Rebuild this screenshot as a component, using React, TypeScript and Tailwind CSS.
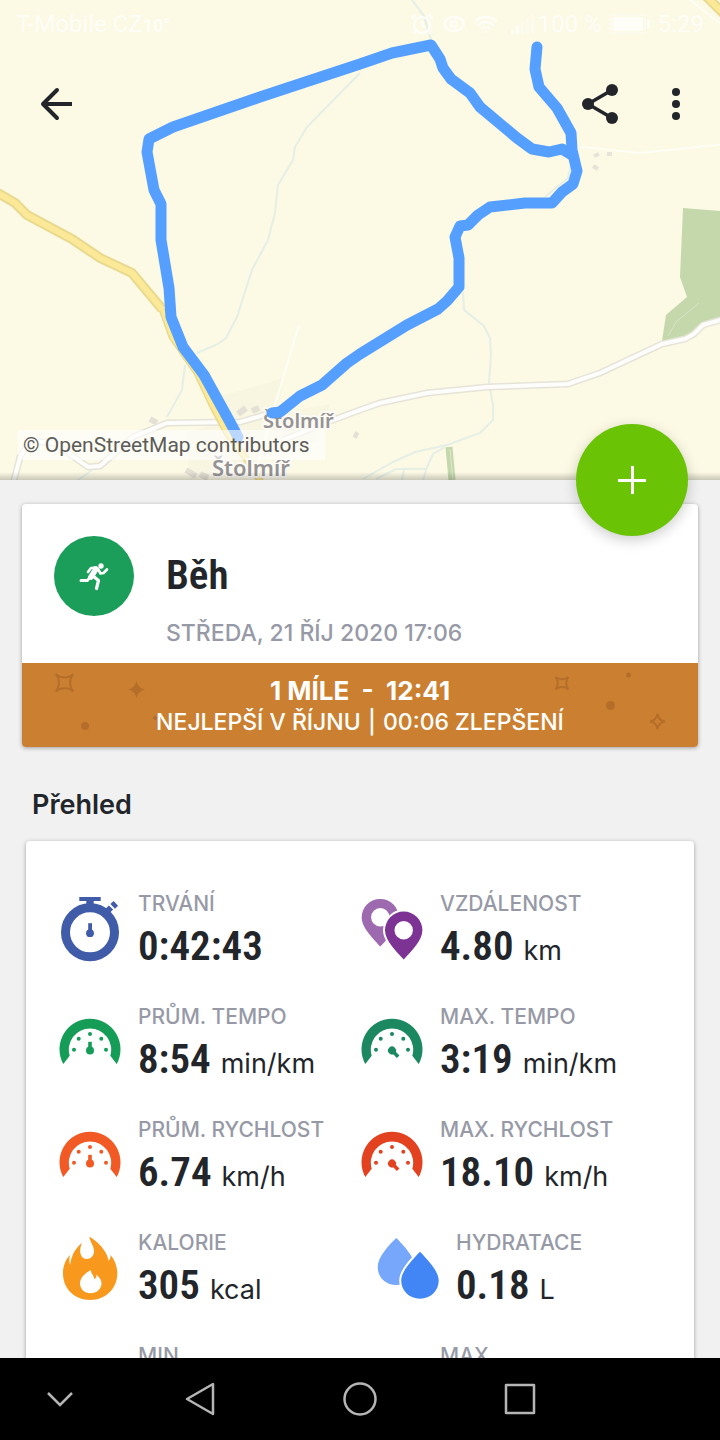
import type { ReactNode } from 'react';
import { AlarmClock, Eye, Wifi } from 'lucide-react';

const ROUTE_WEST =
  'M238 437 L230 422 L204 375 L183 347 L171 317 L169 288 L161 240 L161 204 L154 190 L147 152 L149 139 L173 127 L260 97 L360 64 L392 53 L431 45 L440 59 L443 68 L451 79 L470 93 L480 107 L517 138 L532 149 L549 152 L562 149 L572 155';
const ROUTE_EAST =
  'M537 47 L535 69 L539 87 L557 108 L571 133 L572 150 L577 171 L573 184 L562 192 L552 203 L525 203 L490 207 L478 215 L468 225 L460 226 L455 237 L459 258 L459 287 L447 301 L438 309 L407 325 L360 354 L347 363 L322 385 L300 396 L280 412 L272 413';
const MAIN_ROAD_WIDE = 'M-4 192 L15 203 L27 215 L72 239 L100 258 L132 273 L162 309';
const MAIN_ROAD_NARROW = 'M162 309 L172 337 L197 373 L213 407 L227 433 L247 460 L262 484';
const SIDE_ROAD =
  'M13 484 L20 457 L30 441 L55 443 L68 453 L88 467 L100 466 L133 437 L167 423 L240 422 L268 414 M283 440 L333 420 L360 410 L380 403 L427 393 L487 387 L568 384 L600 373 L662 344 L685 339 L694 334 L703 325 L724 319';

function RouteMap() {
  return (
    <svg
      viewBox="0 0 720 480"
      preserveAspectRatio="xMidYMid slice"
      className="absolute inset-0 h-full w-full"
      role="img"
      aria-label="Mapa trasy"
    >
      <rect width="720" height="480" fill="#fcf9e5" />
      <path d="M222 396 L284 378 L276 414 L330 404 L318 440 L190 480 L186 432 L232 420 Z" fill="#f8f5e1" />
      <path d="M683 208 L720 211 L720 320 L703 326 L685 338 L662 341 L666 315 L687 297 L680 277 Z" fill="#c4d8ac" />
      <path d="M668 336 L676 322 L699 303" fill="none" stroke="#d9e4c6" strokeWidth="1" />
      <path d="M449 447 L452 480" stroke="#c4d8ac" strokeWidth="7" />
      <path d="M450 449 L453 480" stroke="#dfe8cc" strokeWidth="1" />
      <g fill="none" stroke="#e5efe6" strokeWidth="2">
        <path d="M360 73 L307 127 L295 147 L293 160 L278 185 L275 213 L268 240 L252 270 L237 317 L226 338 L218 344 L197 353" />
        <path d="M185 365 L182 390 L167 417 M412 0 L424 16 L431 40" />
        <path d="M463 293 L464 310 L484 326 L490 338 L491 355 L489 383 L493 405 L493 420 L480 433 L447 445 L415 452 L393 462 L363 479" />
        <path d="M445 447 L433 454 L427 467 L423 480 M425 469 L396 469 L376 479 M404 470 L402 480" />
        <path d="M572 160 L568 178 L545 197 M95 468 L78 480" />
      </g>
      <path d="M581 147 L640 153 L724 144 M690 0 L724 26 M299 325 L283 378 L256 470" fill="none" stroke="#fefdf6" strokeWidth="2" />
      <path d="M594 156 l5 -2 M607 154 l5 0 M593 166 l5 3" stroke="#e6e3d8" strokeWidth="4" />
      <path d="M150 419 l7 4 M238 414 l8 -6 M252 411 l7 -3 M186 470 l10 6 M200 474 l8 4 M354 434 l4 2" stroke="#e5e0d6" strokeWidth="6" />
      <path d={SIDE_ROAD} fill="none" stroke="#e6e4d8" strokeWidth="7" />
      <path d={SIDE_ROAD} fill="none" stroke="#fdfdfb" strokeWidth="4" />
      <path d={MAIN_ROAD_NARROW} fill="none" stroke="#e9d98f" strokeWidth="7" />
      <path d={MAIN_ROAD_NARROW} fill="none" stroke="#fce998" strokeWidth="4" />
      <path d={MAIN_ROAD_WIDE} fill="none" stroke="#e9d98f" strokeWidth="10" />
      <path d={MAIN_ROAD_WIDE} fill="none" stroke="#fce998" strokeWidth="6" />
      <path d="M704 -6 L724 14" stroke="#e9d98f" strokeWidth="10" />
      <path d="M704 -6 L724 14" stroke="#fce998" strokeWidth="6" />
      <g
        className="font-['Noto_Sans',sans-serif] font-semibold"
        fill="#949292"
        stroke="#fbfaf4"
        strokeWidth="4"
        paintOrder="stroke"
      >
        <text x="263" y="428" fontSize="20">Štolmíř</text>
        <text x="212" y="476" fontSize="22">Štolmíř</text>
      </g>
      <g fill="none" stroke="#549fff" strokeWidth="11" strokeLinejoin="round" strokeLinecap="round">
        <path d={ROUTE_WEST} />
        <path d={ROUTE_EAST} />
      </g>
    </svg>
  );
}

function StatusBar() {
  return (
    <div className="relative flex h-12 items-center justify-between px-4 font-[Roboto,sans-serif] text-2xl text-white/70">
      <div className="flex items-baseline">
        <span>T-Mobile CZ</span>
        <span className="text-lg font-bold">10°</span>
      </div>
      <div className="flex items-center gap-2">
        <AlarmClock size={24} strokeWidth={2.5} />
        <Eye size={24} strokeWidth={2.5} />
        <Wifi size={24} strokeWidth={2.5} />
        <span className="flex items-center gap-1">
          <svg width="28" height="20" viewBox="0 0 28 20" fill="currentColor" aria-hidden="true">
            <path d="M5 16h3v4H5zM10 12h3v8h-3z" />
            <path d="M15 8h3v12h-3zM20 4h3v16h-3zM25 0h3v20h-3z" opacity=".5" />
          </svg>
          <span>100 %</span>
        </span>
        <svg width="40" height="20" viewBox="0 0 40 20" fill="currentColor" aria-hidden="true">
          <rect x="1" y="1" width="34" height="18" rx="2" fill="none" stroke="currentColor" strokeWidth="1" />
          <rect x="3" y="3" width="30" height="14" />
          <rect x="37" y="6" width="3" height="8" />
        </svg>
        <span>5:29</span>
      </div>
    </div>
  );
}

function BackIcon() {
  return (
    <svg width="48" height="48" viewBox="0 0 48 48" fill="none" stroke="#22262a" strokeWidth="4" aria-hidden="true">
      <path d="M40 24 H12" />
      <path d="M25 10 L11 24 L25 38" strokeLinecap="round" strokeLinejoin="round" />
    </svg>
  );
}

function ShareIcon() {
  return (
    <svg width="48" height="48" viewBox="0 0 48 48" fill="#22262a" aria-hidden="true">
      <path d="M36 10 L12 24 L36 38" fill="none" stroke="#22262a" strokeWidth="3.5" />
      <circle cx="36" cy="10" r="6" />
      <circle cx="12" cy="24" r="6" />
      <circle cx="36" cy="38" r="6" />
    </svg>
  );
}

function MoreIcon() {
  return (
    <svg width="48" height="48" viewBox="0 0 48 48" fill="#22262a" aria-hidden="true">
      <circle cx="24" cy="12" r="4" />
      <circle cx="24" cy="24" r="4" />
      <circle cx="24" cy="36" r="4" />
    </svg>
  );
}

function RunnerIcon() {
  return (
    <svg width="32" height="32" viewBox="0 0 32 32" fill="none" stroke="#fff" strokeLinecap="round" strokeLinejoin="round" aria-hidden="true">
      <circle cx="23" cy="6" r="2.7" fill="#fff" stroke="none" />
      <path d="M18 9 L13 17" strokeWidth="5.5" />
      <path d="M18 7.5 L13 8 L10 12" strokeWidth="2.6" />
      <path d="M20 9 L22.5 13.5 L25.5 13 L29 9.5" strokeWidth="2.6" />
      <path d="M12 17 L9.5 20.5 L3 20.5" strokeWidth="3" />
      <path d="M15 16 L20.5 20.5 L18.5 28.5" strokeWidth="3.2" />
    </svg>
  );
}

function StopwatchIcon() {
  return (
    <svg viewBox="0 0 64 64" className="h-16 w-16 overflow-visible" fill="#405ca8" aria-hidden="true">
      <circle cx="32" cy="34.3" r="24.5" fill="none" stroke="#405ca8" strokeWidth="9" />
      <path d="M21.3 -1h21.4v4h-7v6h-7.4V3h-7z" />
      <path d="M48 14.5 L53 9.5" stroke="#405ca8" strokeWidth="6" />
      <path d="M54.7 8.3 L57.8 5.3" stroke="#405ca8" strokeWidth="6.5" />
      <rect x="30.2" y="25.2" width="3.8" height="9" />
      <circle cx="32" cy="35.2" r="3.9" />
    </svg>
  );
}

function GaugeIcon({ color, max }: { color: string; max?: boolean }) {
  return (
    <svg viewBox="0 0 64 64" className="h-16 w-16" fill={color} aria-hidden="true">
      <path d="M5.3 53 A30.5 30.5 0 1 1 58.7 53 L52.3 44.8 A21.2 21.2 0 1 0 11.7 44.8 Z" />
      <circle cx="16" cy="38.7" r="2" />
      <circle cx="20.7" cy="27.7" r="2" />
      <circle cx="32" cy="23" r="2" />
      <circle cx="43.3" cy="27.7" r="2" />
      <circle cx="48" cy="38.7" r="2" />
      <g transform={max ? 'rotate(135 32 39.5)' : undefined}>
        <rect x="30.2" y="30.8" width="3.6" height="9" />
        <circle cx="32" cy="39.5" r="4" />
      </g>
    </svg>
  );
}

function PinsIcon() {
  return (
    <svg viewBox="0 0 64 64" className="h-16 w-16" aria-hidden="true">
      <path d="M20.3 48.5 C14 41 1.7 30 1.7 19.4 A18.5 18.5 0 0 1 38.7 19.4 C38.7 30 27 41 20.3 48.5 Z" fill="#9e6aaf" />
      <circle cx="20.3" cy="19.3" r="9.2" fill="#fff" />
      <path
        d="M43.7 61.5 C37 54 25 43 25 32.3 A18.7 18.7 0 0 1 62.4 32.3 C62.4 43 50.4 54 43.7 61.5 Z"
        fill="#7c3394"
        stroke="#fff"
        strokeWidth="4"
        paintOrder="stroke"
      />
      <circle cx="43.7" cy="32.3" r="9.2" fill="#fff" />
    </svg>
  );
}

function FlameIcon() {
  return (
    <svg viewBox="0 0 64 64" className="h-16 w-16 overflow-visible" aria-hidden="true">
      <path
        d="M31.3 -0.3 C38 3 49 13 50.7 24 C52 22 52.6 20.5 52.6 18 C57 23 59.3 30 59.3 36.5 C59.3 52 47 63 32.3 63 C17 63 5 52 5 36.5 C5 30 7 23 12 18 C11 21 11 25 12.2 27.7 C13 20 17 11 24 6 C22 11 21.8 14 22.6 17 C23.5 20.5 26 22 28.5 22 C33 22 36 18.5 36 14 C36 9 32.5 6 31.3 -0.3 Z"
        fill="#f8981d"
      />
      <path
        d="M33 33 C27 36 22 41 22 46.5 C22 52 26.5 56.3 32.5 56.3 C38.5 56.3 43.5 52 43.5 46.5 C43.5 43 41.5 40.5 38.5 37.5 C38.8 40 38 41.5 36 42 C36.5 38 32.5 37 33 33 Z"
        fill="#fff"
      />
    </svg>
  );
}

function DropsIcon() {
  return (
    <svg viewBox="0 0 64 64" className="h-16 w-16" aria-hidden="true">
      <path d="M20.3 1 C27 8 39 20 39 30 C39 40.5 31 48 20.3 48 C9.6 48 1.7 40.5 1.7 30 C1.7 20 13 8 20.3 1 Z" fill="#77a7fa" />
      <path
        d="M44 14.7 C50 21 62.7 33.5 62.7 43.5 C62.7 54 54.5 61.7 44 61.7 C33.5 61.7 25.2 54 25.2 43.5 C25.2 33.5 38 21 44 14.7 Z"
        fill="#4286f5"
        stroke="#fff"
        strokeWidth="4"
        paintOrder="stroke"
      />
    </svg>
  );
}

type Stat = {
  label: string;
  value?: string;
  unit?: string;
  icon?: ReactNode;
  indent?: boolean;
};

const stats: Stat[] = [
  { label: 'TRVÁNÍ', value: '0:42:43', icon: <StopwatchIcon /> },
  { label: 'VZDÁLENOST', value: '4.80', unit: 'km', icon: <PinsIcon /> },
  { label: 'PRŮM. TEMPO', value: '8:54', unit: 'min/km', icon: <GaugeIcon color="#159d57" /> },
  { label: 'MAX. TEMPO', value: '3:19', unit: 'min/km', icon: <GaugeIcon color="#1b8861" max /> },
  { label: 'PRŮM. RYCHLOST', value: '6.74', unit: 'km/h', icon: <GaugeIcon color="#f15a24" /> },
  { label: 'MAX. RYCHLOST', value: '18.10', unit: 'km/h', icon: <GaugeIcon color="#e2421f" max /> },
  { label: 'KALORIE', value: '305', unit: 'kcal', icon: <FlameIcon /> },
  { label: 'HYDRATACE', value: '0.18', unit: 'L', icon: <DropsIcon />, indent: true },
  { label: 'MIN' },
  { label: 'MAX' },
];

function StatItem({ label, value, unit, icon, indent }: Stat) {
  return (
    <div className={`flex items-center gap-4 ${indent ? 'pl-4' : ''}`}>
      <div className="h-16 w-16 shrink-0">{icon}</div>
      <dl className="whitespace-nowrap">
        <dt className="text-[21px] leading-8 font-medium text-[#979aa6]">{label}</dt>
        <dd className="h-[52px] leading-[52px]">
          {value && (
            <span className="font-['Roboto_Condensed',Roboto,sans-serif] text-[41px] font-semibold">
              {value}
            </span>
          )}
          {unit && <span className="ml-2.5 text-[27px]">{unit}</span>}
        </dd>
      </dl>
    </div>
  );
}

function BannerSparkles() {
  return (
    <svg
      viewBox="0 0 676 84"
      preserveAspectRatio="xMidYMid slice"
      className="absolute inset-0 h-full w-full"
      fill="#b56e2a"
      aria-hidden="true"
    >
      <g fill="none" stroke="#b56e2a" strokeWidth="2">
        <path d="M33.500 11 C38 15.500 47 15.500 51.500 11 C47 15.500 47 24 51.500 28.500 C47 24 38 24 33.500 28.500 C38 24 38 15.500 33.500 11 Z" />
        <path d="M533.500 14 C537 17 543 17 546.500 14 C543.500 17 543.500 23 546.500 26.500 C543 23 537 23 533.500 26.500 C536.500 23 536.500 17 533.500 14 Z" />
        <path d="M635.500 51 Q636.500 57.500 643 58.500 Q636.500 59.500 635.500 66 Q634.500 59.500 628 58.500 Q634.500 57.500 635.500 51 Z" />
      </g>
      <path d="M114.500 18 Q116 25 123 26.500 Q116 28 114.500 35 Q113 28 106 26.500 Q113 25 114.500 18 Z" />
      <circle cx="63" cy="63" r="4" />
      <circle cx="133" cy="55" r="2" />
      <circle cx="588.5" cy="42.5" r="4.5" />
      <circle cx="606.5" cy="12" r="2.5" />
    </svg>
  );
}

export default function App() {
  return (
    <div className="flex h-screen flex-col overflow-hidden bg-[#f1f1f1] font-[Inter,sans-serif] text-[#22262a]">
      <main className="min-h-0 flex-1 overflow-hidden">
        <header className="relative h-[480px]">
          <RouteMap />
          <StatusBar />
          <div className="relative flex items-center justify-between px-8 pt-8">
            <button type="button" aria-label="Zpět">
              <BackIcon />
            </button>
            <div className="-mr-3 flex items-center gap-7">
              <button type="button" aria-label="Sdílet">
                <ShareIcon />
              </button>
              <button type="button" aria-label="Další možnosti">
                <MoreIcon />
              </button>
            </div>
          </div>
          <a
            href="https://www.openstreetmap.org/copyright"
            className="absolute bottom-5 left-[18px] bg-white/60 pr-4 pl-[5px] font-[Roboto,sans-serif] text-[21px] leading-[30px] text-[#5c5c58]"
          >
            © OpenStreetMap contributors
          </a>
          <div className="absolute inset-x-0 bottom-0 h-2 bg-linear-to-b from-black/0 to-black/20" />
          <button
            type="button"
            aria-label="Přidat"
            className="absolute right-8 -bottom-14 flex h-28 w-28 items-center justify-center rounded-full bg-[#6ac405] shadow-[0_4px_14px_rgba(0,0,0,0.2)]"
          >
            <svg width="28" height="28" viewBox="0 0 28 28" stroke="#fff" strokeWidth="3" aria-hidden="true">
              <path d="M14.5 0 V28 M0 14.5 H28" />
            </svg>
          </button>
        </header>

        <section className="mx-[22px] mt-6 overflow-hidden rounded bg-white shadow-[0_1px_4px_rgba(0,0,0,0.35)]">
          <div className="flex gap-8 px-8 pt-8">
            <div className="flex h-20 w-20 shrink-0 items-center justify-center rounded-full bg-[#1b9e5a]">
              <RunnerIcon />
            </div>
            <div className="pt-[13px] pb-2.5">
              <h1 className="font-['Roboto_Condensed',Roboto,sans-serif] text-[41px] leading-[52px] font-semibold">
                Běh
              </h1>
              <p className="pt-3 text-[23px] leading-10 font-medium text-[#979aa6]">STŘEDA, 21 ŘÍJ 2020 17:06</p>
            </div>
          </div>
          <div className="relative bg-[#cb7f31] pt-3 pb-2.5 text-center text-white">
            <BannerSparkles />
            <p className="relative text-[26px] leading-8 font-bold whitespace-pre">1 MÍLE  -  12:41</p>
            <p className="relative text-[23px] leading-[30px] font-medium">
              NEJLEPŠÍ V ŘÍJNU <span className="mx-px">|</span> 00:06 ZLEPŠENÍ
            </p>
          </div>
        </section>

        <h2 className="mx-8 mt-10 text-[27px] leading-9 font-semibold">Přehled</h2>

        <section className="mx-[26px] mt-[18px] grid grid-cols-2 gap-y-[29px] rounded bg-white px-8 pt-[47px] shadow-[0_1px_4px_rgba(0,0,0,0.35)]">
          {stats.map((stat) => (
            <StatItem key={stat.label} {...stat} />
          ))}
        </section>
      </main>

      <nav className="z-10 grid h-[82px] shrink-0 grid-cols-[3fr_4fr_4fr_4fr_3fr] items-center bg-black">
        <button type="button" aria-label="Skrýt lištu" className="flex justify-center">
          <svg width="36" height="36" viewBox="0 0 36 36" fill="none" stroke="#b5b5b5" strokeWidth="2.5" aria-hidden="true">
            <path d="M6 12 L18 24 L30 12" />
          </svg>
        </button>
        <button type="button" aria-label="Zpět" className="flex justify-center">
          <svg width="36" height="36" viewBox="0 0 36 36" fill="none" stroke="#b5b5b5" strokeWidth="2.5" strokeLinejoin="round" aria-hidden="true">
            <path d="M31 3 V33 L5 18 Z" />
          </svg>
        </button>
        <button type="button" aria-label="Domů" className="flex justify-center">
          <svg width="36" height="36" viewBox="0 0 36 36" fill="none" stroke="#b5b5b5" strokeWidth="2.5" aria-hidden="true">
            <circle cx="18" cy="18" r="15.5" />
          </svg>
        </button>
        <button type="button" aria-label="Poslední aplikace" className="flex justify-center">
          <svg width="36" height="36" viewBox="0 0 36 36" fill="none" stroke="#b5b5b5" strokeWidth="2.5" strokeLinejoin="round" aria-hidden="true">
            <rect x="4" y="4" width="28" height="28" />
          </svg>
        </button>
      </nav>
    </div>
  );
}
